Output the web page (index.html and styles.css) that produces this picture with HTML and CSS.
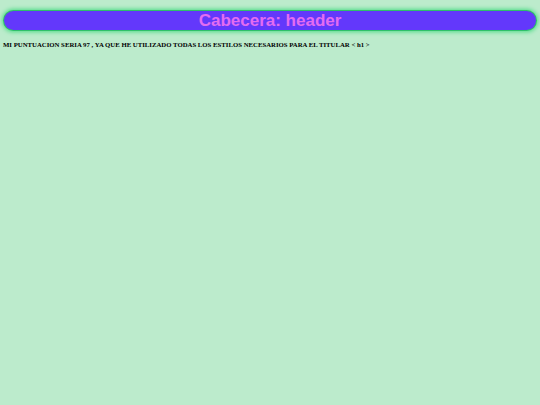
FILE: index.html
```html
<!DOCTYPE html>
<html>
<head>
<meta charset="utf-8">
<link rel="stylesheet" href="styles.css">
</head>
<body>
<header class="cabecera">Cabecera: header</header>
<h1 class="titular">MI PUNTUACION SERIA 97 , YA QUE HE UTILIZADO TODAS LOS ESTILOS NECESARIOS PARA EL TITULAR &lt; h1 &gt;</h1>
</body>
</html>
```
FILE: styles.css
```css
html, body {
  margin: 0;
  padding: 0;
  background: #bcebcc;
}
body {
  padding: 11px 4px 0 4px;
}
.cabecera {
  height: 19px;
  line-height: 20px;
  background: #6338fb;
  border-radius: 10px;
  box-shadow: 0 0 0 1px #2fbf6a, 0 0 4px 2px #4fdc86;
  color: #e36cf1;
  font-family: "Liberation Sans", Arial, sans-serif;
  font-weight: bold;
  font-size: 17px;
  text-align: center;
}
.titular {
  margin: 11px 0 0 -1px;
  font-family: "Liberation Serif", "Times New Roman", serif;
  font-weight: bold;
  font-size: 6.75px;
  color: #000;
}
```
